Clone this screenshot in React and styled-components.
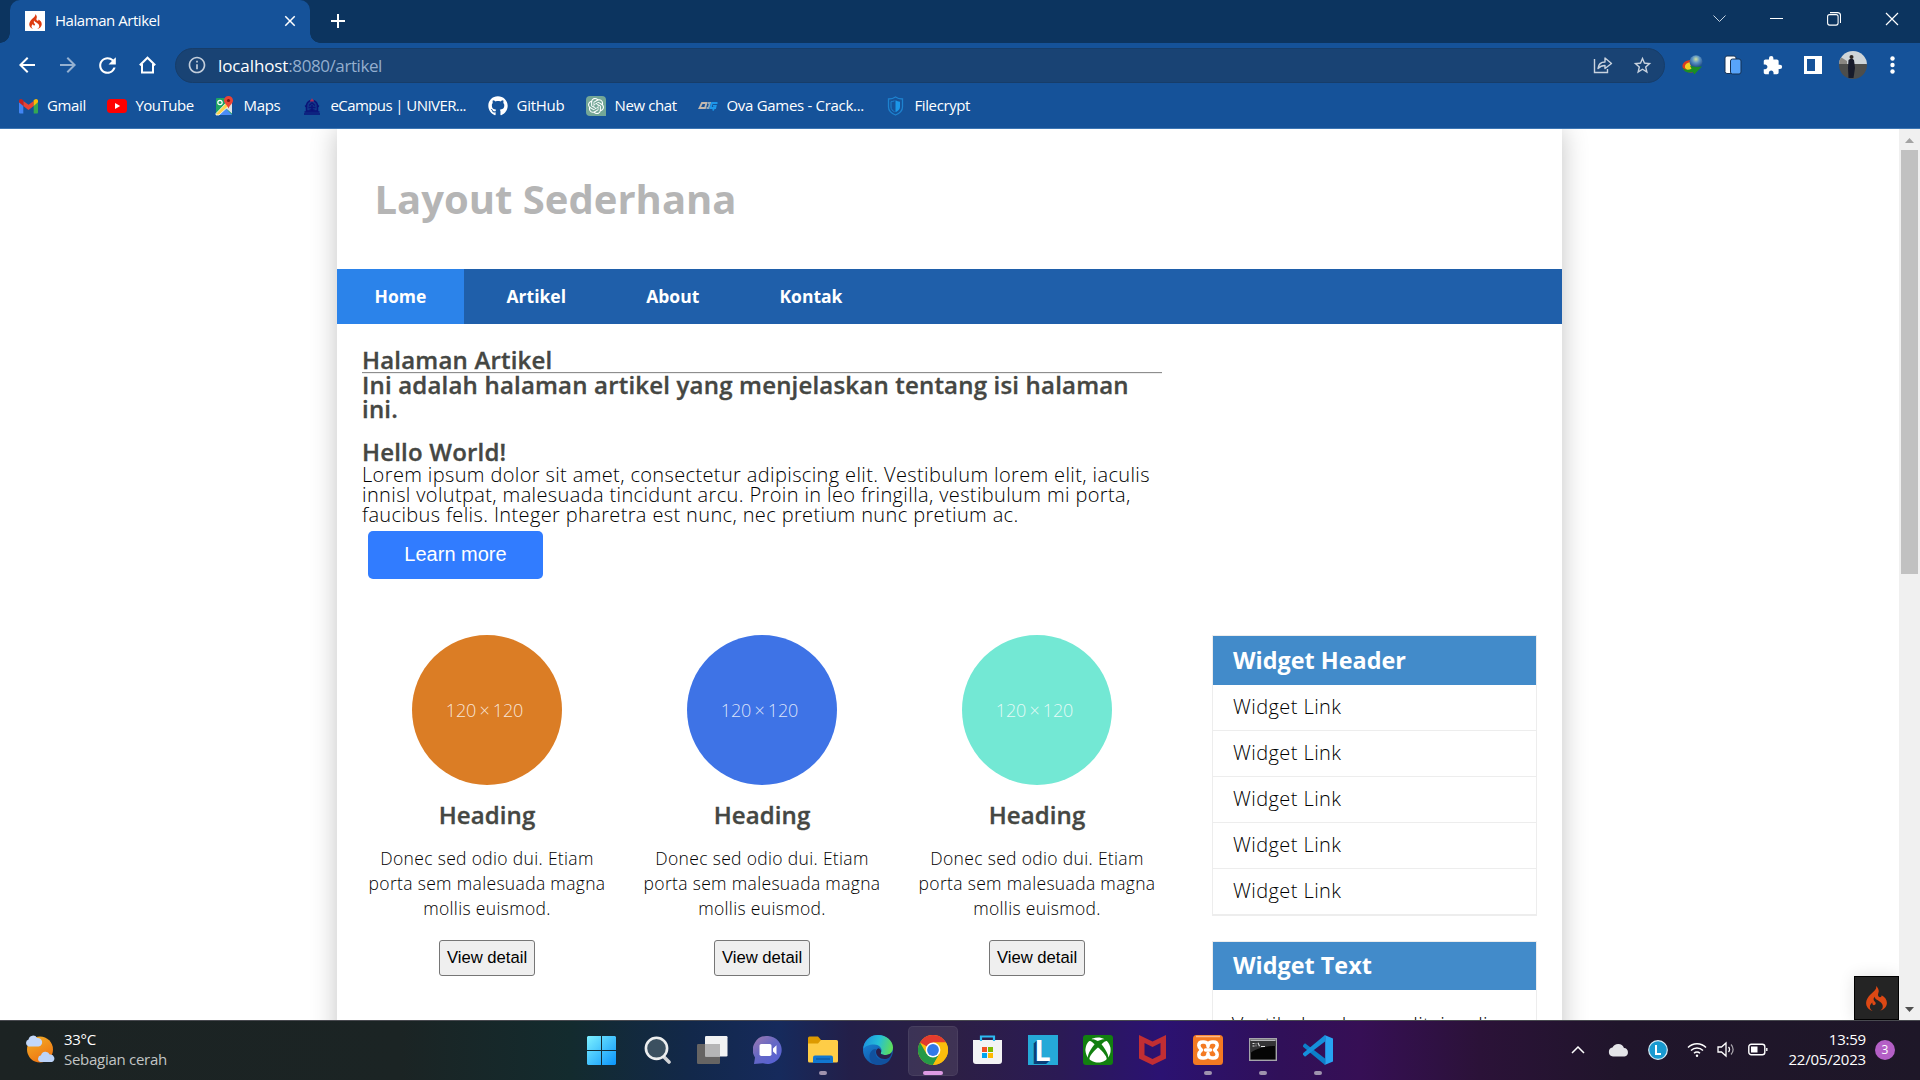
import React from 'react';
import styled, { createGlobalStyle } from 'styled-components';
import { SiCodeigniter, SiOpenai } from 'react-icons/si';
import { FaGithub, FaXbox } from 'react-icons/fa';
import { MdExtension, MdStarBorder, MdArrowBack, MdArrowForward, MdRefresh, MdInfoOutline, MdClose, MdAdd } from 'react-icons/md';

const Global = createGlobalStyle`
  * { box-sizing: border-box; }
  html, body { margin: 0; padding: 0; background: #fff; overflow: hidden; }
  svg { display: block; flex: none; }
`;

const Screen = styled.div`
  width: 1920px; height: 1080px; display: flex; flex-direction: column; overflow: hidden;
  font-family: "Open Sans", "Noto Sans", sans-serif; font-size: 15px;
`;

/* ---------- browser chrome ---------- */
const TabStrip = styled.div`
  height: 43px; background: #0c345f; display: flex; align-items: stretch; padding-left: 10px; color: #fff;
`;
const Tab = styled.div`
  position: relative; width: 300px; background: #155299; border-radius: 10px 10px 0 0;
  display: flex; align-items: center; padding: 0 11px 1px 15px;
  &::before, &::after {
    content: ''; position: absolute; bottom: 0; width: 10px; height: 10px;
  }
  &::before { left: -10px; background: radial-gradient(circle at 0 0, transparent 9.5px, #155299 10px); }
  &::after { right: -10px; background: radial-gradient(circle at 100% 0, transparent 9.5px, #155299 10px); }
`;
const Favicon = styled.span`
  width: 20px; height: 20px; background: #fff; color: #dd3b10; display: grid; place-items: center; margin-right: 10px;
`;
const TabTitle = styled.span`flex: 1; letter-spacing: -0.45px; padding-bottom: 2px;`;
const NewTab = styled.div`width: 56px; display: grid; place-items: center; padding: 0 1px 1px 0;`;
const WindowButtons = styled.div`
  margin-left: auto; display: flex; align-items: center; gap: 44px; padding: 0 21px 6px 0;
`;
const Toolbar = styled.div`
  height: 44px; background: #155299; display: flex; align-items: center; color: #fff; padding: 0 0 0 15px;
`;
const ToolButton = styled.span`
  width: ${p => p.$w || 41}px; display: flex; opacity: ${p => (p.$dim ? 0.55 : 1)};
`;
const AddressBar = styled.div`
  width: 1490px; height: 35px; border-radius: 18px; background: #194374; border: 1px solid #173d69;
  display: flex; align-items: center; padding: 0 11px 0 11px; font-size: 17px;
`;
const Host = styled.span`margin-left: 11px; letter-spacing: -0.1px;`;
const Path = styled.span`color: #93aece; letter-spacing: -0.42px; flex: 1;`;
const AddressActions = styled.span`display: flex; align-items: center; gap: 19px; color: #c9d3df;`;
const Extensions = styled.div`
  display: grid; grid-template-columns: repeat(6, 40px); align-items: center; justify-items: center; padding-left: 7.5px;
`;
const Bookmarks = styled.div`
  height: 42px; background: #155299; border-bottom: 1px solid #3d76b3; display: flex; align-items: center;
  color: #fff; padding: 0 0 3px 18px;
`;
const Bookmark = styled.div`
  width: ${p => p.$w}px; display: flex; align-items: center; gap: 9px; white-space: nowrap; letter-spacing: ${p => p.$ls}px;
`;
const BookmarkIcon = styled.span`width: 20px; height: 20px; display: grid; place-items: center;`;
const BookmarkName = styled.span`padding-bottom: 2px;`;
const ChatBadge = styled.span`
  width: 20px; height: 20px; border-radius: 4px 4px 0 4px; background: #74a797; display: grid; place-items: center;
`;

/* ---------- page ---------- */
const Viewport = styled.div`height: 891px; display: flex; overflow: hidden; background: #fff;`;
const Page = styled.div`flex: 1; display: flex; justify-content: center; overflow: hidden; position: relative;`;
const Container = styled.div`width: 1225px; height: 1400px; background: #fff; box-shadow: 0 0 25px rgba(0,0,0,0.24);`;
const Header = styled.header`height: 140px; padding: 44px 0 0 37.5px;`;
const SiteTitle = styled.h1`margin: 0; font-size: 40px; line-height: 51px; font-weight: 700; color: #b5b5b5;`;
const Nav = styled.nav`height: 55px; background: #1f5faa; display: flex; gap: 5px;`;
const NavLink = styled.a`
  padding: 0 37.6px; color: #fff; font-size: 17.5px; font-weight: 700; line-height: 55px;
  background: ${p => (p.$active ? '#2b83ea' : 'transparent')};
`;
const Hero = styled.section`width: 825px; height: 311px; padding: 23.7px 0 0 25px;`;
const HeroTitle = styled.h2`
  margin: ${p => p.$mt || 0}px 0 0; font-size: 24px; line-height: 24.5px; font-weight: 600; color: #454743; letter-spacing: 0.19px;
  -webkit-text-stroke: 0.35px #454743;
`;
const Rule = styled.div`height: 2px; margin-bottom: -1.5px; border-top: 1px solid #8e8e8e; border-bottom: 1px solid #eee;`;
const Lead = styled.p`margin: 0.8px 0 6.2px; font-size: 20px; line-height: 20px; font-weight: 300; color: #000; letter-spacing: 0.37px; white-space: nowrap;`;
const PrimaryButton = styled.button`
  display: block; width: 175px; height: 48px; margin-left: 6px; border: 0; border-radius: 5px; background: #317cff;
  color: #fff; font: 20px "Liberation Sans", Arial, sans-serif; padding: 0 0 2px;
`;
const Columns = styled.div`display: flex; padding: 0 25px 0 12.5px;`;
const Box = styled.article`width: 275px; display: flex; flex-direction: column; align-items: center; text-align: center;`;
const Circle = styled.div`
  width: 150px; height: 150px; border-radius: 50%; background: ${p => p.$color}; color: rgba(255,255,255,0.82);
  display: grid; place-items: center; font-size: 18px; font-weight: 300; letter-spacing: -0.1px; word-spacing: -1.4px; padding-right: 5px;
`;
const BoxTitle = styled.h3`
  margin: 17px 0 0; font-size: 24px; line-height: 25px; font-weight: 600; color: #454743; letter-spacing: 0.1px;
  -webkit-text-stroke: 0.35px #454743;
`;
const BoxText = styled.p`
  margin: 19px 0 0; width: 246px; font-size: 17.5px; line-height: 25px; font-weight: 300; color: #000; letter-spacing: 0.33px;
`;
const DetailButton = styled.button`
  margin-top: 19px; width: 96px; height: 36px; padding: 0; border: 1px solid #767676; border-radius: 3px; background: #efefef;
  color: #000; font: 16.67px "Liberation Sans", Arial, sans-serif;
`;
const Sidebar = styled.aside`margin-left: 37.5px; width: 325px; display: flex; flex-direction: column; gap: 25px;`;
const Widget = styled.section`border: 1px solid #ededed;`;
const WidgetTitle = styled.h3`
  margin: 0; height: ${p => p.$h}px; padding: 0 20px; background: #428bca; color: #fff; font-size: 23.4px;
  line-height: ${p => p.$h - 1}px; font-weight: 700;
`;
const WidgetLink = styled.a`
  display: block; height: 46px; padding-left: 20px; border-bottom: 1px solid #ededed; font-size: 20px; line-height: 44px;
  font-weight: 300; color: #000; letter-spacing: 0.42px;
`;
const WidgetText = styled.p`
  margin: 0; padding: 24.5px 18.75px; height: 200px; font-size: 20px; line-height: 20px; font-weight: 300; color: #000; letter-spacing: 0.37px;
`;
const DebugBadge = styled.div`
  position: absolute; right: 0; bottom: 0; width: 45px; height: 44px; background: #242424; border: 1px solid #000;
  color: #dd4814; display: grid; place-items: center; box-shadow: 0 0 16px rgba(0,0,0,0.12);
`;
const Scrollbar = styled.div`
  width: 21px; background: #f0f0f0; display: flex; flex-direction: column; align-items: center; justify-content: space-between; padding: 9px 0 8px;
`;
const Thumb = styled.div`width: 17px; height: 424px; background: #c1c1c1; margin: 7px 0 auto;`;

/* ---------- taskbar ---------- */
const Taskbar = styled.footer`
  height: 60px; display: flex; align-items: center; border-top: 1px solid #48494f; color: #fff;
  background: linear-gradient(90deg, #1c2323 0, #1b2424 400px, #132b2e 570px, #12284a 690px, #162a5c 780px, #231f49 850px, #2c1f44 950px, #2b1a55 1060px, #2b1272 1160px, #301059 1280px, #360f55 1360px, #2b1238 1480px, #20152b 1620px, #1e1728 1920px);
`;
const Weather = styled.div`width: 575px; display: flex; align-items: center; padding: 0 0 3px 25px; gap: 8px; line-height: 20px; letter-spacing: -0.28px;`;
const Condition = styled.div`color: #c2c5c5;`;
const Apps = styled.div`flex: 1; display: flex;`;
const AppButton = styled.div`
  position: relative; width: 50px; height: 50px; margin: 0 2.5px; border-radius: 5px; display: grid; place-items: center; padding-bottom: 1px;
  background: ${p => (p.$active ? 'rgba(255,255,255,0.09)' : 'transparent')};
  box-shadow: ${p => (p.$active ? 'inset 0 0 0 1px rgba(255,255,255,0.06)' : 'none')};
  &::after {
    content: ''; display: ${p => (p.$open ? 'block' : 'none')}; position: absolute; bottom: 1px; left: 50%; height: 4px; border-radius: 2px;
    width: ${p => (p.$active ? 20 : 8)}px; margin-left: ${p => (p.$active ? -10 : -4)}px; background: ${p => (p.$active ? '#dd9be3' : '#9f93ae')};
  }
`;
const Tile = styled.span`
  width: 30px; height: 30px; display: grid; place-items: center; border-radius: ${p => p.$r || 0}px; background: ${p => p.$bg}; color: #fff;
`;
const Letter = styled.span`font: 700 29px/30px "Open Sans", sans-serif; text-shadow: -1px 1px #0a3f7a, -2px 2px #0a3f7a, -3px 3px #0a3f7a;`;
const Tray = styled.div`display: flex; align-items: center; padding: 0 25px 2px 0;`;
const TrayItem = styled.span`width: ${p => p.$w}px; display: flex; justify-content: center;`;
const Clock = styled.div`width: 87px; text-align: right; line-height: 20px; letter-spacing: -0.2px; padding-bottom: 1px;`;
const Count = styled.span`
  width: 20px; height: 20px; margin-left: 9px; border-radius: 50%; background: #b45fc6; font-size: 12px; line-height: 20px; text-align: center;
`;

const Gmail = () => (
  <svg width="19" height="15" viewBox="0 0 19 15">
    <path d="M0 3v10.5a1 1 0 0 0 1 1h3.3V6.5z" fill="#4285f4" /><path d="M19 3v10.5a1 1 0 0 1-1 1h-3.3V6.5z" fill="#34a853" />
    <path d="M4.3 7V2L9.5 5.8 14.7 2v5L9.5 11z" fill="#ea4335" /><path d="M0 3.2V2C0 .2 2 -.5 3.4.6L4.3 1.4V7z" fill="#c5221f" />
    <path d="M19 3.2V2c0-1.8-2-2.5-3.4-1.4l-.9.8V7z" fill="#fbbc04" />
  </svg>
);
const YouTube = () => (<svg width="20" height="14" viewBox="0 0 20 14"><rect width="20" height="14" rx="3.5" fill="#f00" /><path d="M8 4l5.2 3L8 10z" fill="#fff" /></svg>);
const Maps = () => (
  <svg width="19" height="20" viewBox="0 0 19 20">
    <rect x="1" y="2" width="16" height="17" rx="1" fill="#1fa463" /><path d="M17 7v10.500L9.500 11z" fill="#dfe3e6" />
    <path d="M2 19L9.500 11 17 19z" fill="#4b8df8" /><path d="M1 17.500L14 4l3 3L4 19H1z" fill="#fdd24c" stroke="#fff" strokeWidth=".8" />
    <circle cx="5" cy="6.500" r="2.200" fill="none" stroke="#fff" strokeWidth="1.200" />
    <path d="M13.500 0a4.500 4.500 0 0 1 4.500 4.500c0 3-3 4-4.500 8-1.500-4-4.500-5-4.500-8A4.500 4.500 0 0 1 13.500 0z" fill="#ea4335" /><circle cx="13.500" cy="4.500" r="1.600" fill="#7e1510" />
  </svg>
);
const Campus = () => (
  <svg width="18" height="20" viewBox="0 0 18 20" fill="none" stroke="#0b1478" strokeWidth="1.500">
    <path d="M3.500 9a5.800 6.500 0 0 1 11 0v6h-11z" fill="#12398a" /><path d="M1 18h16M1.500 16h15M2 10.500l2-1M16 10.500l-2-1M5.500 11.500h7M9 9v6M6 9.500L9 7l3 2.500M6.500 14h5" /><path d="M7.500 5.500L9 3.500l1.500 2" stroke="#a0305e" />
  </svg>
);
const OvaGames = () => (
  <svg width="20" height="10" viewBox="0 0 20 10" fill="none" strokeWidth="1.800">
    <path d="M4 2h4.500L7 7H1.500z" stroke="#c2b7ae" /><path d="M8.500 7h2L12 2H9.700" stroke="#8fa9bd" /><path d="M19.500 2H14l-1.500 5h4.700l.5-2.200H15M16 7l-1 2.500" stroke="#1d97ea" />
  </svg>
);
const Shield = () => (
  <svg width="17" height="20" viewBox="0 0 17 20"><path d="M8.500 1c2 1.500 4 2 7 2v8c0 4-3 6.300-7 8-4-1.700-7-4-7-8V3c3 0 5-.5 7-2z" fill="none" stroke="#1e82cf" strokeWidth="1.300" />
    <path d="M8.500 4.200c1.500.9 2.800 1.300 4.500 1.500V11c0 2.500-2 4-4.500 5.200z" fill="#1b96e8" /><path d="M7.500 4.800C6.500 5.300 5.300 5.600 4 5.700V11c0 2.300 1.500 3.700 3.500 4.700" fill="none" stroke="#1e82cf" /></svg>
);
const Globe = () => (
  <svg width="21" height="20" viewBox="0 0 21 20">
    <defs><radialGradient id="globe" cx=".5" cy=".3" r=".7"><stop stopColor="#cfe0a0" /><stop offset=".4" stopColor="#5b93c4" /><stop offset="1" stopColor="#173f7d" /></radialGradient></defs>
    <path d="M8 5C2 6 0 9 .5 12c1 4 6 6 10 5.500L9 8z" fill="#d93a1f" />
    <path d="M8.500 7C4 8 2.500 10 3 12.500c1.500 3 5 4 8 3.500L10 8z" fill="#f2cf24" />
    <circle cx="14" cy="6.800" r="6.500" fill="url(#globe)" />
    <path d="M.5 12.500c2.500 2.500 6 2.700 9 1.300l-1.500-3c4 1.500 8 1.200 12 .7-2.500 3-5 4.500-7.500 8l-1.800-2.500C6 18.500 1.500 16.500.5 12.500z" fill="#1b8f22" />
  </svg>
);
const Cloudy = () => (
  <svg width="31" height="31" viewBox="0 0 31 31">
    <defs><linearGradient id="sun" x1="0" y1="0" x2=".5" y2="1"><stop stopColor="#f3b229" /><stop offset="1" stopColor="#ef7612" /></linearGradient></defs>
    <circle cx="15" cy="15.500" r="13" fill="url(#sun)" />
    <path d="M3.500 12.500a3.700 3.700 0 0 1 0-7 4.600 4.600 0 0 1 8.600-1.500 4.300 4.300 0 0 1 1.500 8.500z" fill="#c3d8fa" />
    <path d="M15.500 28a3.500 3.500 0 0 1 .5-6.800 4.600 4.600 0 0 1 8.700-.6A3.900 3.900 0 0 1 27 28z" fill="#bcd3f8" />
  </svg>
);
const Start = () => (
  <svg width="31" height="29" viewBox="0 0 31 29"><defs><linearGradient id="win" x1="0" y1="0" x2="1" y2="1"><stop stopColor="#7df1ff" /><stop offset="1" stopColor="#0a94fb" /></linearGradient></defs>
    <path d="M1 0h13v14H0V1zM15 0h13l1 1v13H15zM0 15h14v14H1l-1-1zM15 15h14v13l-1 1H15z" fill="url(#win)" /></svg>
);
const Search = () => (<svg width="27" height="29" viewBox="0 0 27 29"><path d="M19 20l6 6" stroke="#d0d3d6" strokeWidth="3.600" strokeLinecap="round" /><circle cx="12.500" cy="12.300" r="10.600" fill="#3b5060" stroke="#eceeef" strokeWidth="2.600" /></svg>);
const TaskView = () => (<svg width="31" height="29" viewBox="0 0 31 29"><rect y="8" width="23" height="20" rx="1.200" fill="#666463" /><rect x="8" width="22.500" height="20.500" rx="1.200" fill="#f1f2f3" /><path d="M8 8h15v12.500H8z" fill="#b5b5b6" /></svg>);
const Chat = () => (
  <svg width="30" height="30" viewBox="0 0 30 30"><defs><linearGradient id="chat" x1="0" y1="0" x2=".8" y2="1"><stop stopColor="#a07aae" /><stop offset=".5" stopColor="#6668c4" /><stop offset="1" stopColor="#5560d4" /></linearGradient></defs>
    <path d="M15 1a14 14 0 1 1-5 27.200L1 29l1-6.500A14 14 0 0 1 15 1z" fill="url(#chat)" /><rect x="6.500" y="9" width="12" height="12" rx="1.800" fill="#fff" /><path d="M20 13.500l3.500-3.300v9.600L20 16.500z" fill="#fff" /></svg>
);
const Explorer = () => (
  <svg width="30" height="28" viewBox="0 0 30 28"><path d="M0 2a1.500 1.500 0 0 1 1.500-1.500H10L13 4H28v8H0z" fill="#dd9a00" /><path d="M0 7.500h10L13 4h15.500A1.500 1.500 0 0 1 30 5.500V25a1.500 1.500 0 0 1-1.500 1.500h-27A1.500 1.500 0 0 1 0 25z" fill="#fecd47" />
    <path d="M5 27v-5.500A2 2 0 0 1 7 19.500h16a2 2 0 0 1 2 2V27z" fill="#1177d0" /><path d="M8 23h14" stroke="#0a4f96" /></svg>
);
const Edge = () => (
  <svg width="30" height="30" viewBox="0 0 30 30"><defs>
    <linearGradient id="e1" x1="0" y1=".3" x2="1" y2=".5"><stop stopColor="#1d92dc" /><stop offset=".5" stopColor="#25bfd8" /><stop offset="1" stopColor="#5fde58" /></linearGradient>
    <linearGradient id="e2" x1="0" y1="0" x2=".6" y2="1"><stop stopColor="#1a8fe0" /><stop offset="1" stopColor="#1050a0" /></linearGradient></defs>
    <circle cx="15" cy="15" r="15" fill="url(#e2)" />
    <path d="M.5 12C2 4.500 8 0 15 0c8.500 0 15 6 15 12.500 0 5-3.500 7.500-7.500 7.500-3.200 0-5.500-1-4.500-2.500 2-3-1-8-7-8C6 9.500 2 11 .5 14z" fill="url(#e1)" />
    <path d="M12.500 17c-.5 5 4 8.500 9 8.500 3 0 5-1 6.500-2.500-2 4.500-7 7-12 7-6 0-9.500-4-9.500-8.500 0-4 3-7.500 6-7.500 1 0 .2 1 0 3z" fill="#11519e" />
    <path d="M18 17.500c-1 1.500 1.300 2.500 4.500 2.500 2.500 0 4.800-1 6.300-2.800-.7 4-3 6.800-7 6.800-5 0-8.800-3.500-8.800-7 0-2 1.200-3.200 2.500-3.700 2.200.7 3 2.800 2.500 4.200z" fill="#2a1f4b" />
  </svg>
);
const Chrome = () => (
  <svg width="30" height="30" viewBox="0 0 30 30"><circle cx="15" cy="15" r="15" fill="#fbbd0c" />
    <path d="M15 15L2 7.500A15 15 0 0 1 28 7.500H15z" fill="#e33b2e" /><path d="M2 7.500A15 15 0 0 0 15 30l6.500-11.200L8.500 18.700z" fill="#259a48" /><path d="M15 7.500h13a15 15 0 0 1-13 22.500l6.500-11.200z" fill="#fbbd0c" />
    <circle cx="15" cy="15" r="7.400" fill="#fff" /><circle cx="15" cy="15" r="5.900" fill="#3079e8" /></svg>
);
const Store = () => (
  <svg width="30" height="30" viewBox="0 0 30 30"><path d="M0 5h29v21a3 3 0 0 1-3 3H3a3 3 0 0 1-3-3z" fill="#f3f3f4" /><path d="M8 6V1.500h13V6" fill="none" stroke="#2cbaf2" strokeWidth="2.200" />
    <path d="M9 12h5v5H9z" fill="#f25022" /><path d="M15 12h5v5h-5z" fill="#7fba00" /><path d="M9 18h5v5H9z" fill="#00a4ef" /><path d="M15 18h5v5h-5z" fill="#ffb900" /></svg>
);
const McAfee = () => (<svg width="27" height="30" viewBox="0 0 27 30"><path d="M0 0l13.500 6.500L27 0v23.500L13.500 30 0 23.500zM5.500 8v12l8 4 8-4V8l-8 4z" fill="#c12e33" fillRule="evenodd" /></svg>);
const Xampp = () => (
  <svg width="30" height="30" viewBox="0 0 30 30"><rect width="30" height="30" rx="3.500" fill="#f47a22" /><path d="M3 1.500h24" stroke="#fbb98a" strokeWidth="1.500" />
    <path d="M15 11.500q0-4.500-4-4.500H9.500Q5.800 7 5.800 10.500 5.800 12.500 8.500 15 5.800 17.500 5.800 19.500 5.800 23 9.500 23H11q4 0 4-4.500 0 4.500 4 4.500h1.500q3.700 0 3.700-3.500 0-2-2.700-4.500 2.700-2.500 2.700-4.500 0-3.500-3.700-3.500H19q-4 0-4 4.500zM12.500 15h5" fill="none" stroke="#fff" strokeWidth="3.500" strokeLinejoin="round" strokeLinecap="round" /></svg>
);
const Terminal = () => (
  <svg width="28" height="24" viewBox="0 0 28 24"><rect x=".7" y=".7" width="26.600" height="21.600" fill="#050505" stroke="#a5a5aa" strokeWidth="1.400" /><path d="M1.500 1.500h25v1.500h-25z" fill="#b9b9bd" /><path d="M1.500 3h25v5c-10 0-18 2-25 7z" fill="#343436" />
    <path d="M3.500 5.500h2M3.500 8h2M7 5.500v.8M7 7.500v.7M9 4.800l1.500 3.500M12 8.500h4" stroke="#e2e2e2" strokeWidth="1.100" /></svg>
);
const VsCode = () => (
  <svg width="30" height="30" viewBox="0 0 30 30"><path d="M0 10.200l2-2 20 15.300V30L0 11.800z" fill="#0c7fc9" /><path d="M0 19.800l2 2L22 6.500V0L0 18.200z" fill="#1590dc" /><path d="M21.500 0L30 3.500v23L21.500 30c.5-.4.7-.9.7-1.700V1.700c0-.8-.2-1.300-.7-1.700z" fill="#27a4f2" /></svg>
);

const bookmarks = [
  ['Gmail', <Gmail />, 88.5, -0.35], ['YouTube', <YouTube />, 108, -0.52], ['Maps', <Maps />, 87, -0.3], ['eCampus | UNIVER...', <Campus />, 186, -0.58],
  ['GitHub', <FaGithub size={20} />, 98, -0.25], ['New chat', <ChatBadge><SiOpenai size={16} /></ChatBadge>, 112, -0.38],
  ['Ova Games - Crack...', <OvaGames />, 188, -0.3], ['Filecrypt', <Shield />, 120, -0.4],
];
const apps = [
  { icon: <Start /> }, { icon: <Search /> }, { icon: <TaskView /> }, { icon: <Chat /> }, { icon: <Explorer />, open: true }, { icon: <Edge /> },
  { icon: <Chrome />, open: true, active: true }, { icon: <Store /> }, { icon: <Tile $bg="#25a9d8"><Letter>L</Letter></Tile> },
  { icon: <Tile $bg="#128010" $r={3}><FaXbox size={26} /></Tile> }, { icon: <McAfee /> },
  { icon: <Xampp />, open: true }, { icon: <Terminal />, open: true }, { icon: <VsCode />, open: true },
];

export default function App() {
  return (
    <Screen>
      <Global />
      <TabStrip>
        <Tab>
          <Favicon><SiCodeigniter size={15} /></Favicon>
          <TabTitle>Halaman Artikel</TabTitle>
          <MdClose size={18} />
        </Tab>
        <NewTab><MdAdd size={24} /></NewTab>
        <WindowButtons>
          <svg width="13" height="13" fill="none" stroke="#c6d3e2"><path d="M.5 3.500l6 6 6-6" /></svg>
          <svg width="13" height="13" fill="none" stroke="#fff"><path d="M0 6.500h13" /></svg>
          <svg width="14" height="14" fill="none" stroke="#fff" strokeWidth="1.100"><rect x=".6" y="2.600" width="10.500" height="10.500" rx="2" /><path d="M3 .6h7.500a3 3 0 0 1 3 3V11" /></svg>
          <svg width="14" height="14" fill="none" stroke="#fff" strokeWidth="1.200"><path d="M1 1l12 12M13 1L1 13" /></svg>
        </WindowButtons>
      </TabStrip>
      <Toolbar>
        <ToolButton><MdArrowBack size={24} /></ToolButton>
        <ToolButton $dim $w={39}><MdArrowForward size={24} /></ToolButton>
        <ToolButton $w={44}><MdRefresh size={25} /></ToolButton>
        <ToolButton $w={36}>
          <svg width="17" height="18" viewBox="0 0 17 18" fill="none" stroke="#fff" strokeWidth="2"><path d="M.8 9.200L8.500 1.700l7.700 7.500M3 8v8.500h11V8" /></svg>
        </ToolButton>
        <AddressBar>
          <MdInfoOutline size={20} color="#c3cedb" />
          <Host>localhost</Host><Path>:8080/artikel</Path>
          <AddressActions>
            <svg width="20" height="18" viewBox="0 0 20 18" fill="none" stroke="#c9d3df" strokeWidth="1.400"><path d="M1.500 3v13.500h13V13" /><path d="M5 12.500c.5-4.500 3-6.500 7-6.500V2l6.500 5.500L12 12.500V9.500c-3 0-5 .8-7 3z" strokeLinejoin="round" /></svg>
            <MdStarBorder size={21} />
          </AddressActions>
        </AddressBar>
        <Extensions>
          <Globe />
          <svg width="18" height="20" viewBox="0 0 18 20"><rect x="1" y="1" width="11" height="17.500" rx="2" fill="#fff" stroke="#173254" /><rect x="6.500" y="4" width="10.500" height="15" rx="2" fill="#58a4fa" stroke="#173254" /></svg>
          <MdExtension size={21} />
          <svg width="18" height="18" fill="none" stroke="#fff"><rect x="1.500" y="1.500" width="15" height="15" strokeWidth="3" /><path d="M14 1v16" strokeWidth="6" /></svg>
          <svg width="28" height="28" viewBox="0 0 28 28"><defs><clipPath id="av"><circle cx="14" cy="14" r="14" /></clipPath></defs><g clipPath="url(#av)"><path d="M0 0h28v14H0z" fill="#cfd5d8" /><path d="M0 5l8 5v4H0z" fill="#8a8781" /><path d="M0 13h28v15H0z" fill="#4d4e4c" /><path d="M9.500 9q3-2.500 5.500 0l1 8-1.500 10h-5L9 17z" fill="#171b2b" /><circle cx="12.500" cy="6" r="2" fill="#2c2522" /></g></svg>
          <svg width="5" height="18" fill="#fff"><circle cx="2.500" cy="2.500" r="2.200" /><circle cx="2.500" cy="9" r="2.200" /><circle cx="2.500" cy="15.500" r="2.200" /></svg>
        </Extensions>
      </Toolbar>
      <Bookmarks>
        {bookmarks.map(([name, icon, w, ls]) => (
          <Bookmark key={name} $w={w} $ls={ls}><BookmarkIcon>{icon}</BookmarkIcon><BookmarkName>{name}</BookmarkName></Bookmark>
        ))}
      </Bookmarks>
      <Viewport>
        <Page>
          <Container>
            <Header><SiteTitle>Layout Sederhana</SiteTitle></Header>
            <Nav>
              <NavLink $active>Home</NavLink><NavLink>Artikel</NavLink><NavLink>About</NavLink><NavLink>Kontak</NavLink>
            </Nav>
            <Hero>
              <HeroTitle>Halaman Artikel</HeroTitle>
              <Rule />
              <HeroTitle>Ini adalah halaman artikel yang menjelaskan tentang isi halaman<br />ini.</HeroTitle>
              <HeroTitle $mt={18.3}>Hello World!</HeroTitle>
              <Lead>
                Lorem ipsum dolor sit amet, consectetur adipiscing elit. Vestibulum lorem elit, iaculis<br />
                innisl volutpat, malesuada tincidunt arcu. Proin in leo fringilla, vestibulum mi porta,<br />
                faucibus felis. Integer pharetra est nunc, nec pretium nunc pretium ac.
              </Lead>
              <PrimaryButton>Learn more</PrimaryButton>
            </Hero>
            <Columns>
              {['#db7d25', '#3e73e6', '#73e8d4'].map(color => (
                <Box key={color}>
                  <Circle $color={color}>120 × 120</Circle>
                  <BoxTitle>Heading</BoxTitle>
                  <BoxText>Donec sed odio dui. Etiam porta sem malesuada magna mollis euismod.</BoxText>
                  <DetailButton>View detail</DetailButton>
                </Box>
              ))}
              <Sidebar>
                <Widget>
                  <WidgetTitle $h={49}>Widget Header</WidgetTitle>
                  {[1, 2, 3, 4, 5].map(n => <WidgetLink key={n}>Widget Link</WidgetLink>)}
                </Widget>
                <Widget>
                  <WidgetTitle $h={48}>Widget Text</WidgetTitle>
                  <WidgetText>Vestibulum lorem elit, iaculis</WidgetText>
                </Widget>
              </Sidebar>
            </Columns>
          </Container>
          <DebugBadge><SiCodeigniter size={25} /></DebugBadge>
        </Page>
        <Scrollbar>
          <svg width="9" height="5" fill="#a3a3a3"><path d="M0 5L4.500 0 9 5z" /></svg>
          <Thumb />
          <svg width="9" height="5" fill="#505050"><path d="M0 0h9L4.500 5z" /></svg>
        </Scrollbar>
      </Viewport>
      <Taskbar>
        <Weather><Cloudy /><div>33°C<Condition>Sebagian cerah</Condition></div></Weather>
        <Apps>{apps.map((a, i) => <AppButton key={i} $open={a.open} $active={a.active}>{a.icon}</AppButton>)}</Apps>
        <Tray>
          <TrayItem $w={40}><svg width="14" height="8" fill="none" stroke="#fff" strokeWidth="1.500"><path d="M1 7l6-6 6 6" /></svg></TrayItem>
          <TrayItem $w={40}><svg width="21" height="14" viewBox="0 0 21 14"><path d="M5 13.500a4.500 4.500 0 0 1-.5-8.900A6.300 6.300 0 0 1 16 5a4.300 4.300 0 0 1 .5 8.500z" fill="#e4e4e8" /></svg></TrayItem>
          <TrayItem $w={40}><svg width="20" height="20" viewBox="0 0 20 20"><circle cx="10" cy="10" r="9.300" fill="#199ad0" stroke="#d6eef8" strokeWidth="1.200" /><path d="M8 5v9h5" fill="none" stroke="#fff" strokeWidth="2" /></svg></TrayItem>
          <TrayItem $w={38}><svg width="20" height="17" viewBox="0 0 20 17" fill="none" stroke="#fff" strokeWidth="1.500"><path d="M1 6.500a12.700 12.700 0 0 1 18 0M4 9.500a8.500 8.500 0 0 1 12 0M7 12.300a4.300 4.300 0 0 1 6 0" /><circle cx="10" cy="14.800" r="1.200" fill="#fff" stroke="none" /></svg></TrayItem>
          <TrayItem $w={20}><svg width="19" height="17" viewBox="0 0 19 17" fill="none" stroke="#fff" strokeWidth="1.300"><path d="M1 6v5h3.500L9 15V2L4.500 6z" /><path d="M11.500 6a3.500 3.500 0 0 1 0 5" /><path d="M14 3.500a7 7 0 0 1 0 10" opacity=".6" /></svg></TrayItem>
          <TrayItem $w={43}><svg width="20" height="13" viewBox="0 0 20 13" fill="none" stroke="#fff" strokeWidth="1.400"><rect x=".8" y="1.300" width="16" height="10.400" rx="2.500" /><rect x="3" y="3.500" width="6.500" height="6" fill="#fff" stroke="none" /><path d="M18.800 5v3" /></svg></TrayItem>
          <Clock>13:59<br />22/05/2023</Clock>
          <Count>3</Count>
        </Tray>
      </Taskbar>
    </Screen>
  );
}
